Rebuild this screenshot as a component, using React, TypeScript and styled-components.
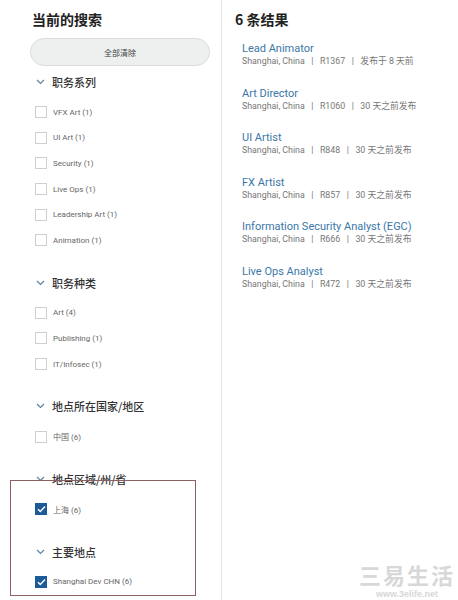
import React from "react";
import styled, { createGlobalStyle } from "styled-components";

const Global = createGlobalStyle`
  html, body { margin: 0; padding: 0; background: #fff; }
  body { font-family: Roboto, "Noto Sans CJK SC", sans-serif; }
`;

const Page = styled.div`
  position: relative;
  width: 458px;
  height: 600px;
  display: flex;
  overflow: hidden;
  background: #fff;
`;

const Sidebar = styled.aside`
  width: 222px;
  box-sizing: border-box;
  border-right: 1px solid #e2e2e2;
  padding: 9px 12px 0 30px;
  display: flex;
  flex-direction: column;
`;

const Heading = styled.h2<{ $indent?: number }>`
  margin: 0;
  font-family: "Noto Sans CJK SC", sans-serif;
  font-size: 14px;
  font-weight: 700;
  line-height: 20px;
  color: #222;
  padding-left: ${(p) => p.$indent ?? 2}px;
`;

const ClearButton = styled.button`
  margin-top: 9px;
  width: 180px;
  height: 28px;
  border-radius: 14px;
  border: 1px solid #d9dddd;
  background: #eef0f0;
  font-family: "Noto Sans CJK SC", sans-serif;
  font-size: 8px;
  color: #444;
  padding: 0;
`;

const Section = styled.section<{ $first?: boolean }>`
  margin-top: ${(p) => (p.$first ? 6 : 19.5)}px;
  display: flex;
  flex-direction: column;
`;

const SectionHeader = styled.div`
  display: flex;
  align-items: center;
  height: 20px;
  padding-left: 6px;
  gap: 7px;
  font-family: "Noto Sans CJK SC", sans-serif;
  font-size: 11px;
  font-weight: 500;
  color: #333;
`;

const Items = styled.ul`
  list-style: none;
  margin: 7.5px 0 0;
  padding: 0 0 0 5px;
`;

const Item = styled.li`
  height: 25.6px;
  display: flex;
  align-items: center;
  gap: 6px;
  font-family: Roboto, "Noto Sans CJK SC", sans-serif;
  font-size: 8px;
  color: #666;
`;

const Box = styled.span<{ $checked?: boolean }>`
  width: 12px;
  height: 12px;
  box-sizing: border-box;
  border: 1px solid ${(p) => (p.$checked ? "#1d5a98" : "#cfcfcf")};
  background: ${(p) => (p.$checked ? "#1d5a98" : "#fff")};
  display: flex;
  align-items: center;
  justify-content: center;
  flex: none;
`;

const Main = styled.main`
  flex: 1;
  padding: 9px 0 0 13px;
  display: flex;
  flex-direction: column;
`;

const Results = styled.ul`
  list-style: none;
  margin: 13px 0 0;
  padding: 0 0 0 7px;
  display: flex;
  flex-direction: column;
  gap: 18.5px;
`;

const Job = styled.li`
  display: flex;
  flex-direction: column;
`;

const JobTitle = styled.a`
  font-family: Roboto, sans-serif;
  font-size: 11px;
  line-height: 13px;
  color: #3a77a8;
  text-decoration: none;
`;

const JobMeta = styled.div`
  font-family: Roboto, "Noto Sans CJK SC", sans-serif;
  font-size: 8.8px;
  line-height: 13px;
  color: #777;
  white-space: pre;
`;

const Highlight = styled.div`
  position: absolute;
  left: 10px;
  top: 480px;
  width: 186px;
  height: 116px;
  box-sizing: border-box;
  border: 1px solid #8e5f60;
  pointer-events: none;
`;

const Watermark = styled.div`
  position: absolute;
  right: 3px;
  bottom: 0;
  display: flex;
  flex-direction: column;
  align-items: center;
  gap: 1px;
  color: #d8d8d8;
  pointer-events: none;
`;

const WmBig = styled.span`
  font-family: "Noto Sans CJK SC", sans-serif;
  font-size: 22px;
  font-weight: 700;
  letter-spacing: 2px;
  line-height: 27px;
`;

const WmSmall = styled.span`
  font-family: "Liberation Sans", sans-serif;
  font-size: 9px;
  font-weight: 700;
  line-height: 11px;
`;

const Chevron = () => (
  <svg width="9" height="6" viewBox="0 0 9 6">
    <path d="M1 1l3.5 3.5L8 1" fill="none" stroke="#5b7f9c" strokeWidth="1.1" />
  </svg>
);

const Check = () => (
  <svg width="9" height="8" viewBox="0 0 9 8">
    <path d="M1 4.2l2.3 2.3L8 1.5" fill="none" stroke="#fff" strokeWidth="1.4" />
  </svg>
);

type Facet = { title: string; items: { label: string; checked?: boolean }[] };

const facets: Facet[] = [
  {
    title: "职务系列",
    items: [
      { label: "VFX Art (1)" },
      { label: "UI Art (1)" },
      { label: "Security (1)" },
      { label: "Live Ops (1)" },
      { label: "Leadership Art (1)" },
      { label: "Animation (1)" },
    ],
  },
  {
    title: "职务种类",
    items: [{ label: "Art (4)" }, { label: "Publishing (1)" }, { label: "IT/Infosec (1)" }],
  },
  { title: "地点所在国家/地区", items: [{ label: "中国 (6)" }] },
  { title: "地点区域/州/省", items: [{ label: "上海 (6)", checked: true }] },
  { title: "主要地点", items: [{ label: "Shanghai Dev CHN (6)", checked: true }] },
];

const jobs = [
  { title: "Lead Animator", id: "R1367", when: "发布于 8 天前" },
  { title: "Art Director", id: "R1060", when: "30 天之前发布" },
  { title: "UI Artist", id: "R848", when: "30 天之前发布" },
  { title: "FX Artist", id: "R857", when: "30 天之前发布" },
  { title: "Information Security Analyst (EGC)", id: "R666", when: "30 天之前发布" },
  { title: "Live Ops Analyst", id: "R472", when: "30 天之前发布" },
];

export default function App() {
  return (
    <Page>
      <Global />
      <Sidebar>
        <Heading>当前的搜索</Heading>
        <ClearButton>全部清除</ClearButton>
        {facets.map((f, i) => (
          <Section key={f.title} $first={i === 0}>
            <SectionHeader>
              <Chevron />
              {f.title}
            </SectionHeader>
            <Items>
              {f.items.map((it) => (
                <Item key={it.label}>
                  <Box $checked={it.checked}>{it.checked && <Check />}</Box>
                  {it.label}
                </Item>
              ))}
            </Items>
          </Section>
        ))}
      </Sidebar>
      <Main>
        <Heading $indent={0}>6 条结果</Heading>
        <Results>
          {jobs.map((j) => (
            <Job key={j.id}>
              <JobTitle href="#">{j.title}</JobTitle>
              <JobMeta>{`Shanghai, China   |   ${j.id}   |   ${j.when}`}</JobMeta>
            </Job>
          ))}
        </Results>
      </Main>
      <Highlight />
      <Watermark>
        <WmBig>三易生活</WmBig>
        <WmSmall>www.3elife.net</WmSmall>
      </Watermark>
    </Page>
  );
}
